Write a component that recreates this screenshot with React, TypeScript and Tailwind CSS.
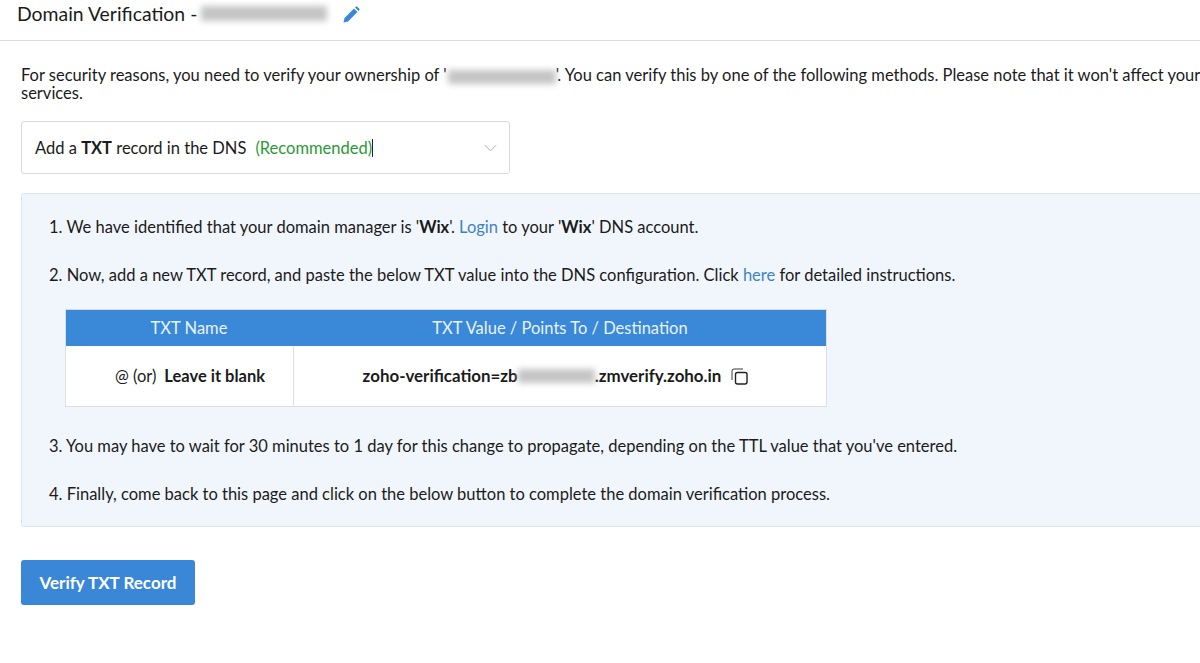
const Blur = ({ className }: { className: string }) => (
  <span className={`inline-block align-middle bg-[#c4c4c4] blur-[3px] ${className}`} />
);

const A = ({ children }: { children: string }) => (
  <span className="text-[#3f82c4]">{children}</span>
);

export default function App() {
  return (
    <div className="w-[1200px] h-[663px] overflow-hidden bg-white text-[#1b1b1b] font-['Lato','Liberation_Sans',sans-serif] text-[16.5px]">
      {/* Header */}
      <div className="h-[41px] border-b border-[#dcdcdc] pl-[17px] flex items-center pb-[13px]">
        <span className="text-[19.4px] leading-[28px]">Domain Verification -</span>
        <Blur className="w-[126px] h-[15px] ml-[4px]" />
        <svg viewBox="0 0 24 24" className="w-[18px] h-[18px] ml-[15px] mt-[2px] text-[#3a87d7]" fill="currentColor">
          <path d="M2 22l1.4-6L16 3.4 20.6 8 8 20.6 2 22zM17.4 2l1-1c.6-.6 1.500-.6 2 0l2.600 2.600c.6.5.6 1.400 0 2l-1 1L17.400 2z" />
        </svg>
      </div>

      <div className="w-[1300px] pl-[21px] pt-[25px]">
        <p className="w-[1195px] leading-[18px]">
          For security reasons, you need to verify your ownership of '
          <Blur className="w-[108px] h-[14px] ml-[1px]" />
          '. You can verify this by one of the following methods. Please note that it won't affect your services.
        </p>

        {/* Select */}
        <div className="mt-[19px] w-[489px] h-[53px] rounded-[3px] border border-[#dadada] flex items-center justify-between pl-[13px] pr-[12px] pt-[1px]">
          <span className="flex items-center">
            Add a&nbsp;<b>TXT</b>&nbsp;record in the DNS
            <span className="ml-[9px] text-[#2a9a35]">(Recommended)</span>
            <span className="w-px h-[18px] bg-[#222]" />
          </span>
          <svg viewBox="0 0 14 8" className="w-[13px] h-[8px] text-[#a8a8a8]" fill="none" stroke="currentColor" strokeWidth="1">
            <path d="M1 1l6 6 6-6" />
          </svg>
        </div>

        {/* Instructions */}
        <div className="mt-[19px] h-[334px] rounded-[3px] border border-[#dbe5f1] bg-[#f1f6fc] pl-[27px] pt-[24px]">
          <p className="leading-[19px]">
            1. We have identified that your domain manager is '<b>Wix</b>'. <A>Login</A> to your '<b>Wix</b>' DNS account.
          </p>
          <p className="mt-[29px] leading-[19px]">
            2. Now, add a new TXT record, and paste the below TXT value into the DNS configuration. Click <A>here</A> for detailed instructions.
          </p>

          <div className="mt-[24px] ml-[16px] w-[762px] border border-[#dcdfe3] border-t-[#d5d9de] bg-white">
            <div className="flex h-[36px] bg-[#3a88d8] text-[#e8f2fb] items-center text-center">
              <div className="w-[228px] pl-[18px]">TXT Name</div>
              <div className="flex-1">TXT Value / Points To / Destination</div>
            </div>
            <div className="flex h-[60px] items-center text-center">
              <div className="w-[228px] h-full flex items-center justify-center border-r border-[#dcdfe3] pl-[21px]">
                @ (or)<b className="ml-[8px]">Leave it blank</b>
              </div>
              <div className="flex-1 flex items-center justify-center font-bold text-[16.9px] pr-[9px]">
                zoho-verification=zb
                <Blur className="w-[77px] h-[14px]" />
                .zmverify.zoho.in
                <svg viewBox="0 0 17 17" className="w-[17px] h-[17px] ml-[10px] mt-[1px] text-[#222]" fill="none" stroke="currentColor">
                  <rect x="4.5" y="4.500" width="11.500" height="11.500" rx="2" strokeWidth="1.4" />
                  <path d="M1 12V3a2 2 0 0 1 2-2h9" strokeWidth="0.9" />
                </svg>
              </div>
            </div>
          </div>

          <p className="mt-[30px] leading-[19px]">
            3. You may have to wait for 30 minutes to 1 day for this change to propagate, depending on the TTL value that you've entered.
          </p>
          <p className="mt-[29px] leading-[19px]">
            4. Finally, come back to this page and click on the below button to complete the domain verification process.
          </p>
        </div>

        <button className="mt-[33px] w-[174px] h-[45px] rounded-[3px] bg-[#3a87d7] text-white font-bold text-[17px]">
          Verify TXT Record
        </button>
      </div>
    </div>
  );
}
